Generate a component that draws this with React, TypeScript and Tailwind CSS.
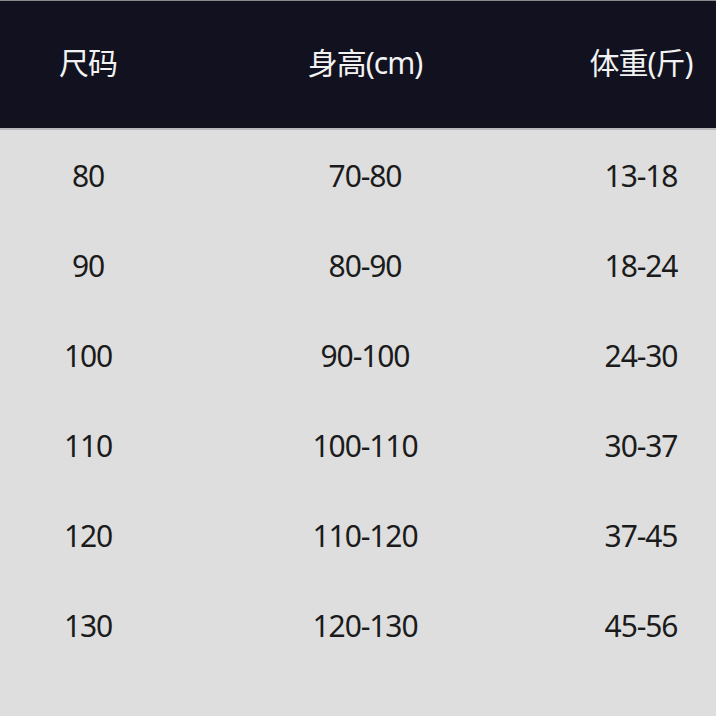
import React from "react";

const rows = [
  ["80", "70-80", "13-18"],
  ["90", "80-90", "18-24"],
  ["100", "90-100", "24-30"],
  ["110", "100-110", "30-37"],
  ["120", "110-120", "37-45"],
  ["130", "120-130", "45-56"],
];

const font = { fontFamily: '"Noto Sans", "Noto Sans CJK SC", sans-serif' };

function Row({ cells, className }: { cells: string[]; className: string }) {
  return (
    <div className={"flex items-center " + className}>
      <div className="w-[176px] shrink-0 text-center">{cells[0]}</div>
      <div className="w-[378px] shrink-0 text-center">{cells[1]}</div>
      <div className="w-[162px] shrink-0 pl-[12px] text-center">{cells[2]}</div>
    </div>
  );
}

export default function App() {
  return (
    <div className="w-[716px] h-[716px] overflow-hidden bg-[#dedede]" style={font}>
      <div className="border-t border-[#8a8a8e] bg-[#11111f] border-b-2 border-b-[#b9b9bd]">
        <Row cells={["尺码", "身高(cm)", "体重(斤)"]} className="h-[127px] pb-[4px] text-[30px] text-[#f2f2f2] tracking-[-1px]" />
      </div>
      <div>
        {rows.map((r, i) => (
          <Row key={i} cells={r} className="h-[90px] text-[30px] text-[#1b1b1b] tracking-[-1.1px]" />
        ))}
      </div>
    </div>
  );
}
